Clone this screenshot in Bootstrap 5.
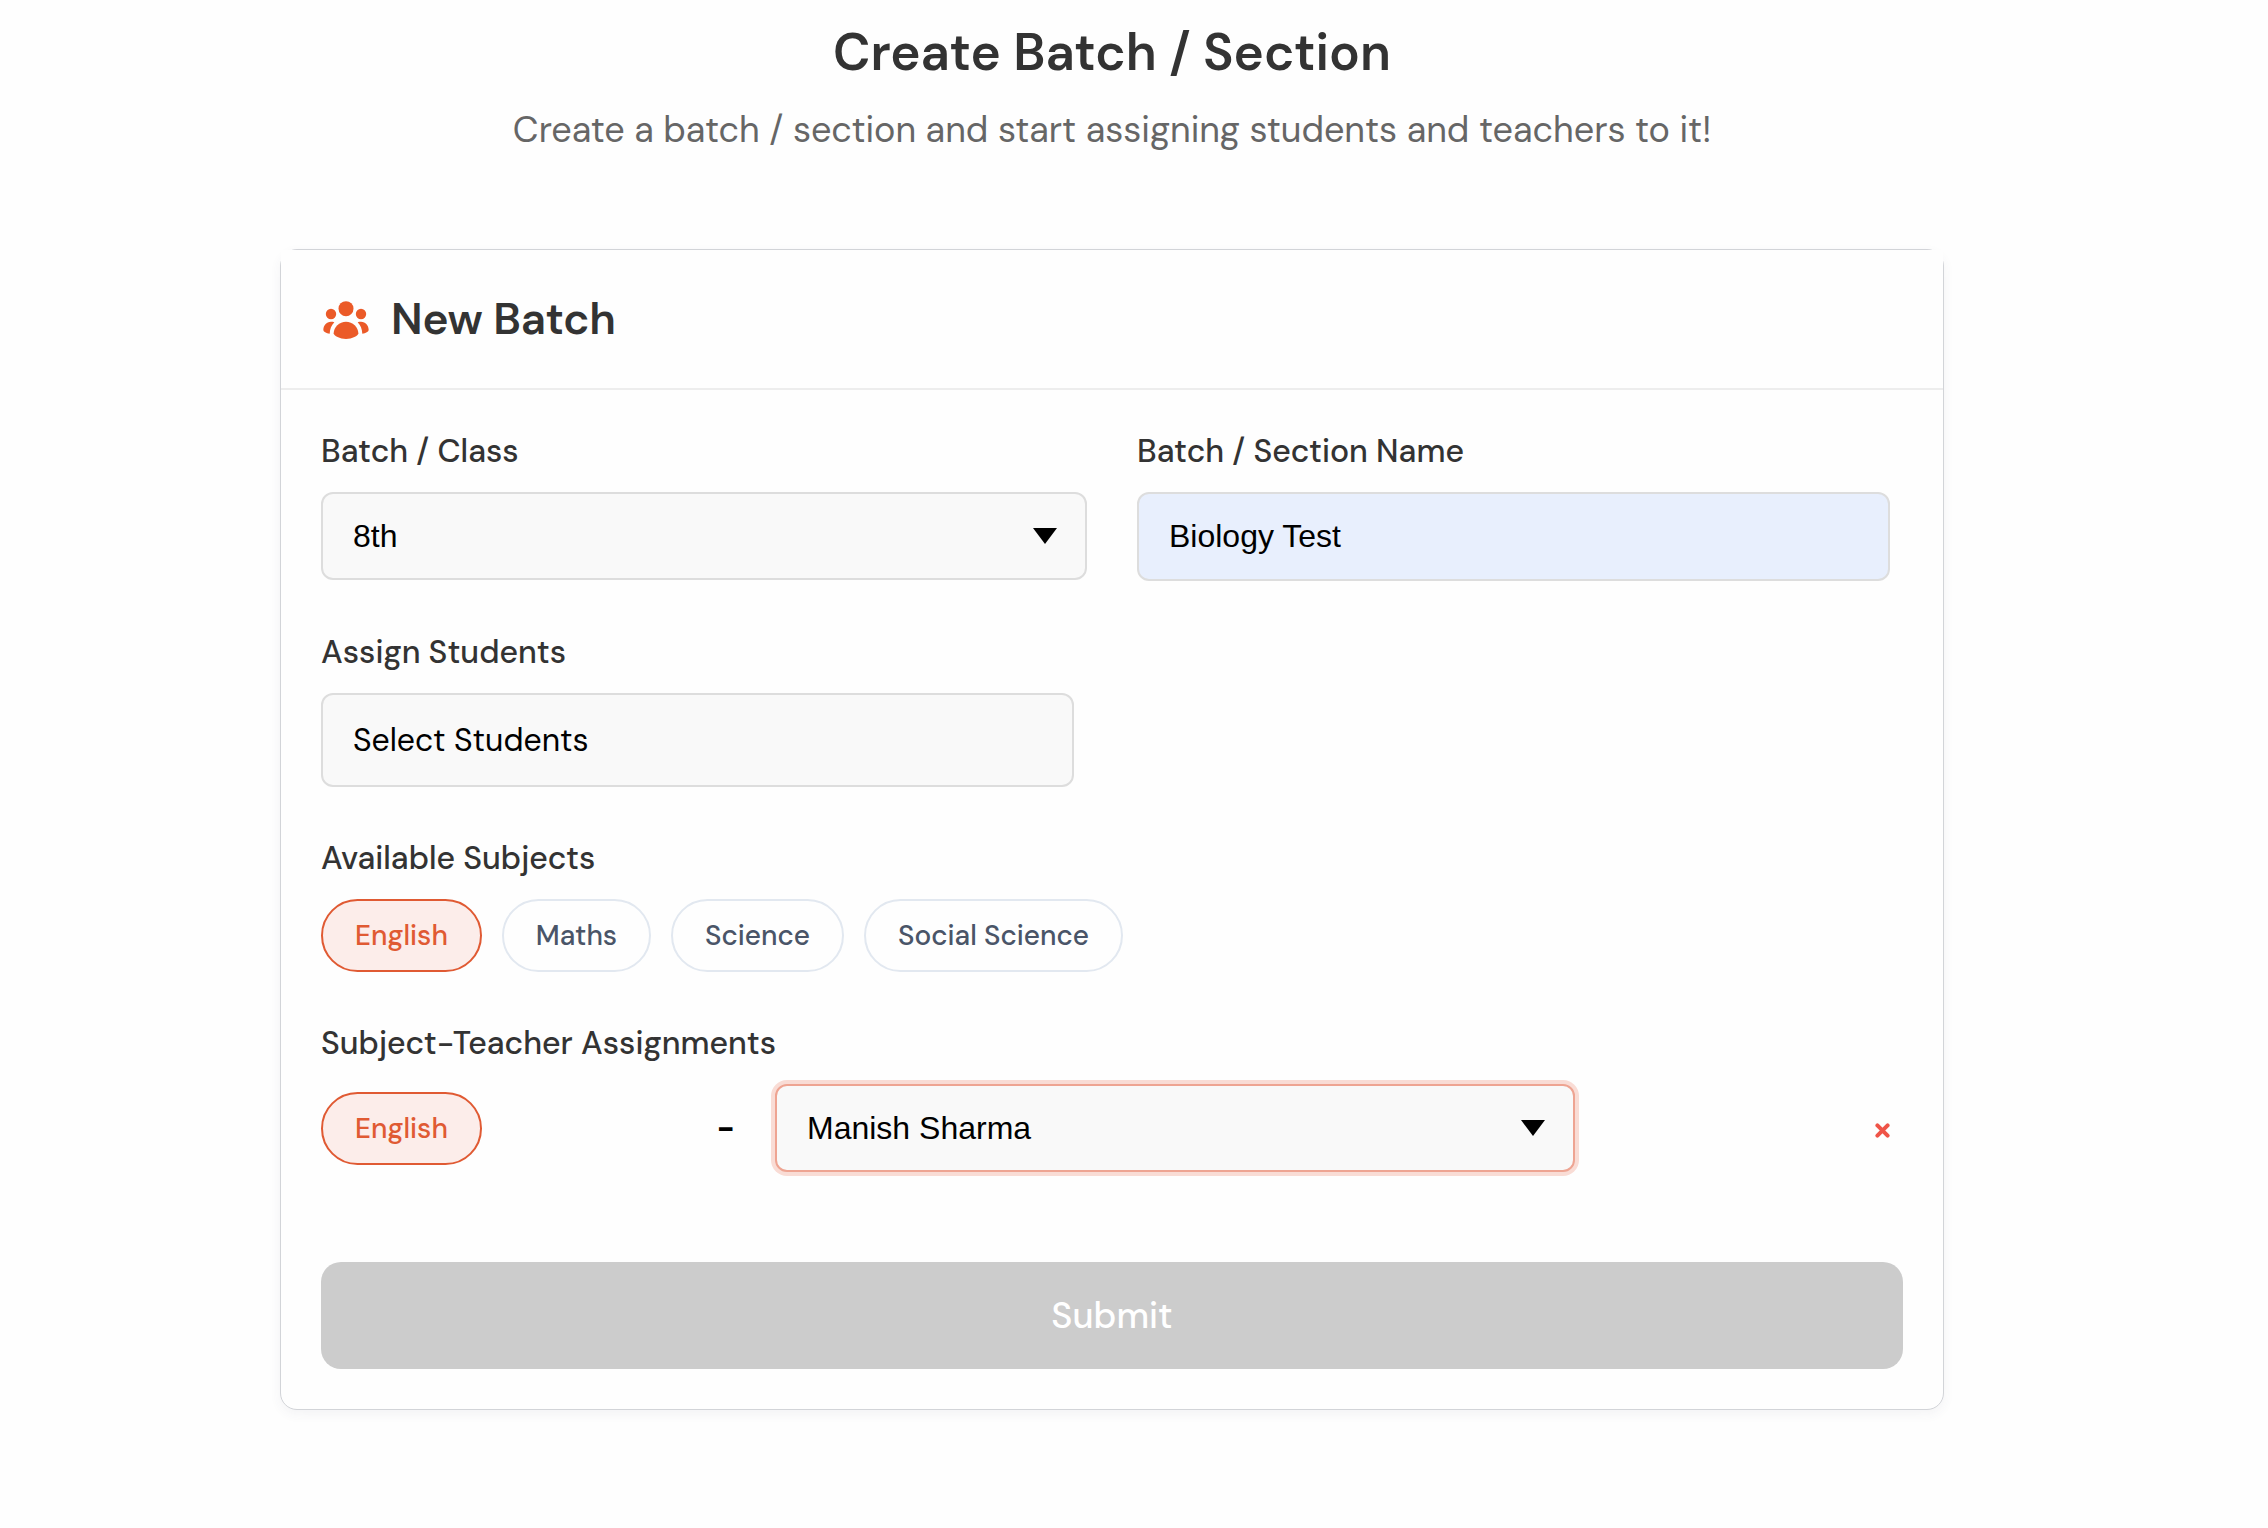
<!DOCTYPE html>
<html lang="en">
<head>
<meta charset="utf-8">
<meta name="viewport" content="width=device-width, initial-scale=1">
<title>Create Batch / Section</title>
<link href="https://cdn.jsdelivr.net/npm/bootstrap@5.3.0/dist/css/bootstrap.min.css" rel="stylesheet">
<style>
  body { font-family: "DM Sans", Inter, sans-serif; color: #333; background: #fefefe; }
  .page { width: 2224px; padding-top: 21px; padding-bottom: 100px; }
  .page-title { font-size: 51.2px; line-height: 64px; font-weight: 600; color: #333; }
  .page-sub { font-size: 36px; line-height: 48px; letter-spacing: -.03px; color: #666; margin-top: 21px; }
  .batch-card { width: 1664px; margin-top: 95px; background: #fefefe; border: 1px solid #d2d4d8; border-radius: 17px;
    box-shadow: 0 4px 12px rgba(60,66,100,.06); }
  .batch-head { height: 140px; padding: 0 40px; border-bottom: 2px solid #ededed; background: #fefefe; gap: 20px; }
  .batch-head svg { width: 50px; height: 50px; fill: #eb5a28; position: relative; top: 1px; }
  .batch-head h2 { font-size: 44px; line-height: 56px; font-weight: 600; letter-spacing: -.15px; color: #333; }
  .batch-body { padding: 40px; gap: 50px; }
  .field-name { font-size: 32px; line-height: 42px; font-weight: 500; color: #333; margin-bottom: 20px; display: block; }
  .field-box { height: 88px; padding: 0 28px 0 30px; border: 2px solid #ddd; border-radius: 12px; background: #f9f9f9;
    color: #000; font-family: "Liberation Sans", Arial, sans-serif; font-size: 32px; line-height: 84px; }
  .field-box svg { width: 24px; height: 16px; fill: #000; }
  .class-field { width: 766px; }
  .name-field { width: 753px; margin-left: 50px; }
  .name-field .field-box { height: 89px; background: #e8effd; }
  .student-field .field-box { width: 753px; height: 94px; font-family: "DM Sans", Inter, sans-serif; }
  .subject-list { gap: 20px; }
  .subject-pill { height: 73px; line-height: 69px; border: 2px solid #e2e8f0; border-radius: 37px;
    background: #fefefe; color: #4a5568; font-size: 28px; font-weight: 500; text-align: center; }
  .subject-pill.active { background: #fcedea; border-color: #e05a33; color: #e05a33; }
  .w-english { width: 161px; } .w-maths { width: 149px; } .w-science { width: 173px; } .w-social { width: 259px; }
  .dash-cell { width: 293px; text-align: right; padding-right: 40px; font-size: 32px; font-weight: 700; line-height: 75px; color: #000; }
  .teacher-select { width: 800px; border-color: #eea492; box-shadow: 0 0 0 4px #f9dcd5; }
  .remove-btn { margin-right: 13px; padding-top: 5px; }
  .remove-btn svg { width: 15px; height: 15px; display: block; }
  .submit-btn { height: 107px; border: 0; border-radius: 20px; background: #ccc; color: #fff; font-size: 36px; font-weight: 500; margin-top: 40px; }
</style>
</head>
<body>
<main class="page d-flex flex-column align-items-center">
  <h1 class="page-title mb-0">Create Batch / Section</h1>
  <p class="page-sub mb-0">Create a batch / section and start assigning students and teachers to it!</p>

  <section class="batch-card">
    <header class="batch-head d-flex align-items-center">
      <svg viewBox="9 0 150 150" aria-hidden="true">
        <circle cx="84" cy="41" r="22.5"/><circle cx="39" cy="57" r="15.5"/><circle cx="129" cy="57" r="15.5"/>
        <path d="M84 80C64 80 47 97 47 115C47 123 66 132 84 132S121 123 121 115C121 97 104 80 84 80Z"/>
        <path d="M39 80C25 80 16 92 16 104C16 110 25 114 35 116C36 102 40 91 49 82C46 80 42 80 39 80Z"/>
        <path d="M129 80C143 80 152 92 152 104C152 110 143 114 133 116C132 102 128 91 119 82C122 80 126 80 129 80Z"/>
      </svg>
      <h2 class="mb-0">New Batch</h2>
    </header>

    <form class="batch-body d-flex flex-column">
      <div class="d-flex align-items-start">
        <div class="class-field">
          <label class="field-name">Batch / Class</label>
          <div class="field-box d-flex align-items-center justify-content-between">8th
            <svg viewBox="0 0 24 16"><path d="M0 0h24L12 16Z"/></svg></div>
        </div>
        <div class="name-field">
          <label class="field-name">Batch / Section Name</label>
          <div class="field-box">Biology Test</div>
        </div>
      </div>

      <div class="student-field">
        <label class="field-name">Assign Students</label>
        <div class="field-box d-flex align-items-center">Select Students</div>
      </div>

      <div>
        <label class="field-name">Available Subjects</label>
        <div class="subject-list d-flex">
          <div class="subject-pill active w-english">English</div>
          <div class="subject-pill w-maths">Maths</div>
          <div class="subject-pill w-science">Science</div>
          <div class="subject-pill w-social">Social Science</div>
        </div>
      </div>

      <div>
        <label class="field-name">Subject-Teacher Assignments</label>
        <div class="d-flex align-items-center">
          <div class="subject-pill active w-english">English</div>
          <div class="dash-cell">-</div>
          <div class="field-box teacher-select d-flex align-items-center justify-content-between">Manish Sharma
            <svg viewBox="0 0 24 16"><path d="M0 0h24L12 16Z"/></svg></div>
          <button type="button" class="remove-btn btn px-0 pb-0 border-0 ms-auto" aria-label="Remove">
            <svg viewBox="0 0 15 15"><path d="M2.4 2.4l10.2 10.2M12.6 2.4l-10.2 10.2" stroke="#ef5448" stroke-width="4" stroke-linecap="round"/></svg>
          </button>
        </div>
      </div>

      <button type="button" class="submit-btn w-100">Submit</button>
    </form>
  </section>
</main>
<script src="https://cdn.jsdelivr.net/npm/bootstrap@5.3.0/dist/js/bootstrap.bundle.min.js"></script>
</body>
</html>
